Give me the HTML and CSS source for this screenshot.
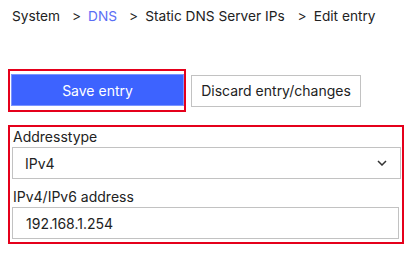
FILE: index.html
```html
<!DOCTYPE html>
<html>
<head>
	<meta charset="utf-8">
	<title>Edit entry</title>
	<link rel="stylesheet" href="styles.css">
</head>
<body>

<!-- 경로 -->
<div class="crumb">
	<span>System</span><b>&gt;</b><a href="#">DNS</a><b>&gt;</b><span>Static DNS Server IPs</span><b class="wide">&gt;</b><span>Edit entry</span>
</div>

<!-- 버튼 -->
<div class="btns">
	<div class="mark mark-save">
		<button type="button" class="save">Save entry</button>
	</div>
	<button type="button" class="discard">Discard entry/changes</button>
</div>

<!-- 입력 폼 -->
<form class="mark mark-form" action="" name="entry">
	<label class="lbl">Addresstype</label>
	<div class="sel">
		<span>IPv4</span>
		<svg width="10" height="6" viewBox="0 0 10 6"><path d="M1 1 L5 5 L9 1" fill="none" stroke="#333" stroke-width="1.5"/></svg>
	</div>
	<label class="lbl lbl2">IPv4/IPv6 address</label>
	<div class="inp">192.168.1.254</div>
</form>

</body>
</html>
```

FILE: styles.css
```css
* { margin:0px; padding:0px; box-sizing:border-box; }
body { font-family:"Inter", "Liberation Sans", sans-serif; font-size:14px; color:#222; background:#fff; }

.crumb { display:flex; align-items:center; height:34px; padding:0 0 0 12px; line-height:1; font-size:13.7px; }
.crumb b { font-weight:normal; margin:0 7px 0 12px; }
.crumb b.wide { margin-left:13px; }
.crumb a { color:#5b6ef5; text-decoration:none; }

.btns { display:flex; align-items:center; margin:35px 0 0 8px; height:43px; gap:5px; }
.mark { border:2px solid #e5001b; }
.mark-save { width:178px; height:43px; padding:3px 0 0 1px; }
.save { width:173px; height:32px; background:#3d63ff; color:#fff; border:1px solid #7a95ff; font:14px "Inter", "Liberation Sans", sans-serif; }
.discard { width:170px; height:32px; background:#fff; color:#222; border:1px solid #c2c2c2; font:14px "Inter", "Liberation Sans", sans-serif; }

.mark-form { width:396px; height:119px; margin:13px 0 0 8px; padding:0 2px 3px 2px; }
.lbl { display:block; height:20px; line-height:20px; padding-left:1px; }
.lbl2 { margin-top:8px; }
.sel { display:flex; align-items:center; justify-content:space-between; width:389px; height:32px; border:1px solid #c2c2c2; padding:0 13px 0 12px; }
.sel svg { display:block; }
.inp { display:flex; align-items:center; width:387px; height:32px; border:1px solid #c2c2c2; padding-left:13px; }
```
